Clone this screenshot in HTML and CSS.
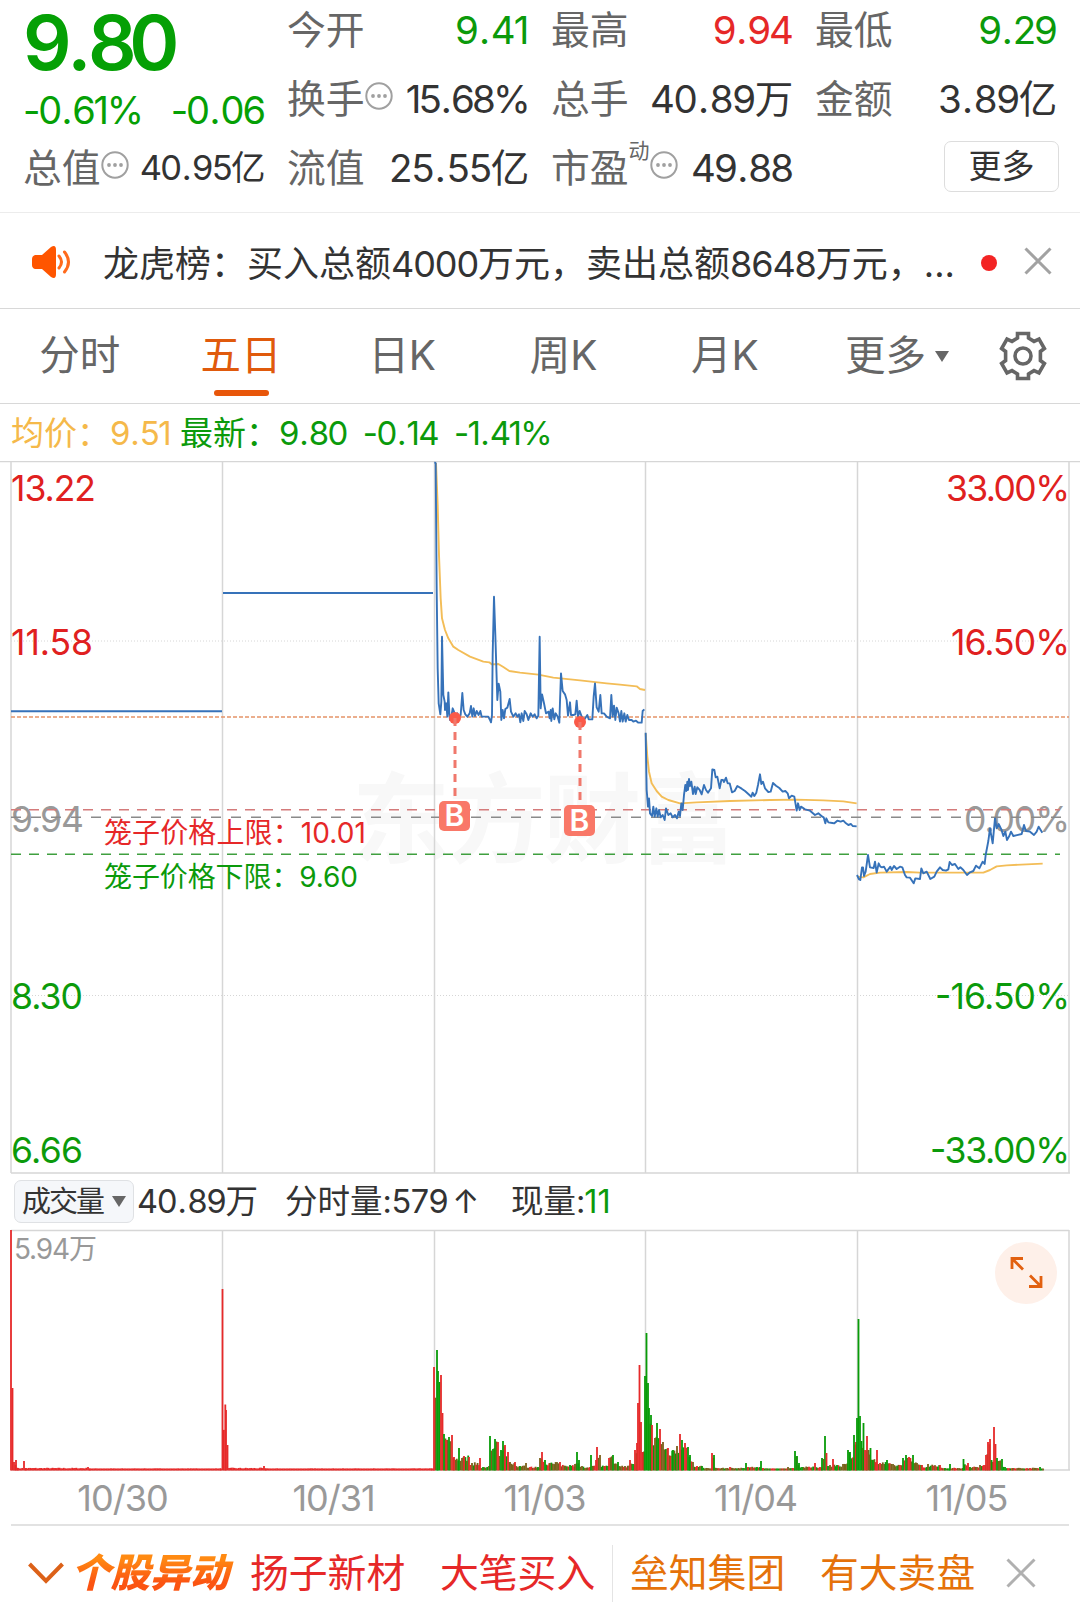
FILE: index.html
```html
<!DOCTYPE html>
<html lang="zh-CN">

<head>
    <meta charset="UTF-8">
    <meta name="viewport" content="width=device-width, initial-scale=1.0">
    <title>个股行情</title>
    <link rel="stylesheet" href="styles.css">
</head>

<body>
    <svg class="defs" width="0" height="0">
        <symbol id="info" viewBox="0 0 28 28">
            <circle cx="14" cy="14" r="12.7" fill="none" stroke="#a0a0a0" stroke-width="2" />
            <circle cx="8" cy="14" r="1.9" fill="#a0a0a0" />
            <circle cx="14" cy="14" r="1.9" fill="#a0a0a0" />
            <circle cx="20" cy="14" r="1.9" fill="#a0a0a0" />
        </symbol>
    </svg>

    <!-- Quote header -->
    <section class="quote">
        <div class="main-price">
            <div class="price">9<i>.</i>80</div>
            <div class="change"><span class="pct">-0<i>.</i>61%</span><span>-0<i>.</i>06</span></div>
        </div>
        <div class="cell"><span class="label">今开</span><span class="value green">9<i>.</i>41</span></div>
        <div class="cell"><span class="label">最高</span><span class="value short red">9<i>.</i>94</span></div>
        <div class="cell"><span class="label">最低</span><span class="value short green">9<i>.</i>29</span></div>
        <div class="cell"><span class="label">换手</span><svg class="info"><use href="#info" /></svg><span class="value pct">15<i>.</i>68%</span></div>
        <div class="cell"><span class="label">总手</span><span class="value">40<i>.</i>89万</span></div>
        <div class="cell"><span class="label">金额</span><span class="value">3<i>.</i>89亿</span></div>
        <div class="cell"><span class="label">总值</span><svg class="info"><use href="#info" /></svg><span class="value small">40<i>.</i>95亿</span></div>
        <div class="cell"><span class="label">流值</span><span class="value">25<i>.</i>55亿</span></div>
        <div class="cell"><span class="label">市盈</span><span class="sup">动</span><svg class="info"><use href="#info" /></svg><span class="value short">49<i>.</i>88</span></div>
        <div class="cell"><button class="more-btn">更多</button></div>
    </section>

    <!-- Notice -->
    <section class="notice">
        <svg class="horn" width="42" height="34" viewBox="0 0 42 34">
            <path d="M4 10h7l9-8q5-3 5 3v24q0 6-5 3l-9-8H4q-3-1-3-4v-6q0-3 3-4z" fill="#ff5500" />
            <path d="M28 11q5 6 0 12M33.500 7q8 10 0 20" fill="none" stroke="#ff6a1c" stroke-width="3" stroke-linecap="round" />
        </svg>
        <p class="notice-text">龙虎榜：买入总额<span class="num">4000</span>万元，卖出总额<span class="num">8648</span>万元，<span class="dots">...</span></p>
        <span class="red-dot"></span>
        <svg class="close" width="28" height="28" viewBox="0 0 28 28">
            <path d="M1.500 1.500L26.500 26.500M26.500 1.500L1.500 26.500" stroke="#a2a2a2" stroke-width="3" />
        </svg>
    </section>

    <!-- Period tabs -->
    <nav class="tabs">
        <a class="tab">分时</a>
        <a class="tab active">五日</a>
        <a class="tab">日K</a>
        <a class="tab">周K</a>
        <a class="tab">月K</a>
        <a class="tab tab-more">更多<span class="caret"></span></a>
        <svg class="gear" width="48" height="50" viewBox="0 0 48 50" fill="none" stroke="#666" stroke-width="3.600">
            <path d="M18.500 2.500h11v4.500l5.500 3.400 5-2.300 5.400 9.400-4 3v9l4 3-5.400 9.400-5-2.300-5.500 3.400v4.500h-11V43l-5.500-3.400-5 2.300-5.400-9.400 4-3v-9l-4-3L8 8.100l5 2.300L18.500 7z" />
            <circle cx="24" cy="25" r="8" />
        </svg>
    </nav>

    <div class="legend">
        <span class="avg">均价：<b>9<i>.</i>51</b></span>
        <span class="last">最新：<b>9<i>.</i>80</b><b>-0<i>.</i>14</b><b class="pct">-1<i>.</i>41%</b></span>
    </div>

    <!-- Price chart, 5 days -->
    <svg class="price-chart" width="1080" height="714" viewBox="0 461 1080 714">
        <text class="watermark" x="352" y="855" textLength="385">东方财富</text>
        <g class="grid">
            <path d="M0 461.500H1080M11 1173H1070" />
            <path d="M11 462V1173M222.500 462V1173M434.500 462V1173M645.500 462V1173M857.500 462V1173M1069 462V1173" />
            <path class="dotted" d="M11 641H1069M11 995.500H1069" />
        </g>
        <g class="axis">
            <text class="up" x="11" y="501" textLength="85">13.22</text>
            <text class="up" x="11" y="655" textLength="82">11.58</text>
            <text class="flat" x="11" y="832" textLength="73">9.94</text>
            <text class="down" x="11" y="1009" textLength="72">8.30</text>
            <text class="down" x="11" y="1163" textLength="72">6.66</text>
            <text class="up" x="946" y="501" textLength="124">33.00%</text>
            <text class="up" x="951" y="655" textLength="119">16.50%</text>
            <text class="flat" x="964" y="832" textLength="106">0.00%</text>
            <text class="down" x="935" y="1009" textLength="135">-16.50%</text>
            <text class="down" x="930" y="1163" textLength="140">-33.00%</text>
        </g>
        <path d="M11 717H1069" stroke="#e59468" stroke-width="1.600" stroke-dasharray="4 2" />
        <path d="M11 809.700H1060" stroke="#d47b7b" stroke-width="1.600" stroke-dasharray="10 8" />
        <path d="M11 817.300H1062" stroke="#8a8a8a" stroke-width="1.600" stroke-dasharray="10 10" />
        <path d="M11 854.300H1060" stroke="#3f9f3f" stroke-width="1.600" stroke-dasharray="10 8" />
        <text class="cage red" x="104" y="843" textLength="262">笼子价格上限：10.01</text>
        <text class="cage green" x="104" y="887" textLength="254">笼子价格下限：9.60</text>

        <path class="price-line" d="M11 711.300H222M223 593H433" />
        <g transform="translate(420 455) scale(.33333)">
            <polyline class="avg-line" points="48,24 53,150 57,300 62,430 66,490 75,525 85,550 100,575 115,585 150,605 190,620 208,622 215,628 235,627 250,636 268,648 300,653 355,659 400,668 480,676 560,685 600,689 650,694 660,702 675,705" />
            <polyline class="price-line" points="43,22 47,24 50,400 53,640 56,745 61,778 64,740 66,545 70,720 74,740 75,765 79,745 82,785 85,712 88,775 90,795 95,780 98,760 102,770 106,785 112,775 116,790 122,780 127,714 131,765 136,778 142,785 149,775 153,753 157,785 161,760 165,783 170,768 176,780 181,768 185,785 205,785 210,795 213,802 216,780 218,600 222,425 226,540 232,735 236,686 241,710 244,795 248,765 252,790 256,762 262,758 269,732 273,770 280,785 287,775 292,785 297,778 301,802 305,775 310,798 314,768 320,778 325,795 332,775 338,785 344,778 350,790 355,782 359,545 362,760 366,718 372,745 378,775 386,770 389,790 392,765 394,798 398,760 403,793 407,775 413,785 418,803 420,740 423,655 428,708 435,718 440,735 444,782 450,742 453,780 460,780 466,778 470,737 474,785 479,768 485,785 492,795 502,780 506,793 517,793 521,725 525,685 530,757 536,770 541,720 545,775 552,775 560,785 570,790 574,720 578,785 582,752 586,795 590,758 596,775 600,800 604,768 608,800 613,775 617,800 622,780 627,795 635,795 640,800 648,797 655,803 665,803 668,768 673,763" />
        </g>
        <g transform="translate(630 680) scale(.33333)">
            <polyline class="avg-line" points="47,160 52,230 57,275 65,310 80,333 95,350 115,360 150,370 200,367 300,363 420,360 500,359 580,361 640,364 680,370" />
            <polyline class="price-line" points="47,158 50,330 54,380 57,355 60,400 66,408 70,380 74,410 79,385 83,410 87,390 92,412 98,405 104,420 108,385 115,405 122,400 128,412 135,405 141,415 146,395 150,408 154,370 158,390 162,345 166,315 169,333 172,305 174,330 177,297 180,318 184,305 189,342 194,320 197,342 202,322 209,330 215,343 222,315 228,330 234,338 243,325 247,268 253,270 257,292 262,290 269,325 274,300 279,300 282,306 288,293 293,310 299,310 306,337 314,333 322,318 335,326 345,333 355,342 364,350 368,338 373,348 379,338 384,315 390,283 394,312 399,305 405,325 415,336 422,335 429,309 438,317 448,324 458,335 466,333 473,340 477,355 485,347 493,350 500,392 504,370 509,390 513,380 525,388 540,392 555,405 565,400 577,410 581,412 586,430 589,415 595,427 607,429 613,430 622,422 632,425 640,422 648,430 655,435 663,432 668,438 680,439" />
        </g>
        <g transform="translate(840 760) scale(.33333)">
            <polyline class="avg-line" points="53,350 70,352 90,342 120,338 200,336 240,338 430,338 450,330 470,319 500,316 560,313 608,311" />
            <polyline class="price-line" points="51,345 57,358 61,360 66,322 69,322 72,348 77,335 84,285 90,322 101,324 105,305 110,338 116,310 121,320 126,322 132,320 140,335 151,320 155,330 162,318 170,327 180,320 187,322 195,345 200,352 210,353 221,370 226,355 240,357 244,325 250,340 260,335 271,357 283,350 290,335 300,322 308,330 318,332 325,328 329,306 336,315 345,312 355,327 361,322 370,330 381,345 390,337 400,333 408,317 418,325 428,305 434,312 437,285 445,243 450,205 458,250 465,175 470,205 476,192 484,208 490,228 496,215 501,240 508,228 513,215 520,228 545,222 552,195 558,213 570,215 582,225 590,215 596,200 607,218" />
        </g>

        <!-- Buy marks -->
        <g class="mark">
            <circle cx="455" cy="718" r="6" />
            <path d="M455 718V797" />
            <rect x="439" y="801" width="31" height="30" rx="5" />
            <text x="454.500" y="826">B</text>
            <circle cx="580" cy="722" r="6" />
            <path d="M580 722V801" />
            <rect x="564" y="805" width="31" height="31" rx="5" />
            <text x="579.500" y="831">B</text>
        </g>
    </svg>

    <!-- Volume -->
    <div class="volume-bar">
        <button class="volume-btn"><span>成交量</span><span class="caret"></span></button>
        <span class="v1">40<i>.</i>89<em>万</em></span>
        <span class="v2"><em>分时量</em>:579<em class="arrow">↑</em></span>
        <span class="v3"><em>现量</em>:<b>11</b></span>
    </div>
    <div class="volume-wrap">
        <svg class="volume-chart" width="1080" height="242" viewBox="0 1229 1080 242">
            <path class="line" d="M11 1230.500H1069" />
            <path class="line" d="M222.500 1230V1470M434.500 1230V1470M645.500 1230V1470M857.500 1230V1470M1069 1230V1470M11 1470H1070" />
            <g id="bars"></g>
            <text class="vol-max" x="14" y="1259" textLength="83">5.94万</text>
        </svg>
        <button class="expand">
            <svg width="34" height="34" viewBox="0 0 34 34" fill="none" stroke="#e2600f" stroke-width="2.800">
                <path d="M3 13V2.500H14M4 3.500L14 13.500M32 20V30.500H20M31 29.500L21 19.500" />
            </svg>
        </button>
    </div>
    <div class="dates">
        <span>10/30</span><span>10/31</span><span>11/03</span><span>11/04</span><span>11/05</span>
    </div>

    <!-- Movers ticker -->
    <footer class="ticker">
        <svg class="chevron" width="36" height="22" viewBox="0 0 36 22">
            <path d="M1.500 2L18 19L34.500 2" fill="none" stroke="#dc6118" stroke-width="4" />
        </svg>
        <span class="ticker-logo">个股异动</span>
        <span class="mover red">扬子新材</span>
        <span class="mover red">大笔买入</span>
        <span class="divider"></span>
        <span class="mover orange">垒知集团</span>
        <span class="mover orange">有大卖盘</span>
        <svg class="close" width="30" height="30" viewBox="0 0 30 30">
            <path d="M1.500 1.500L28.500 28.500M28.500 1.500L1.500 28.500" stroke="#b0b0b0" stroke-width="3" />
        </svg>
    </footer>

    <script src="chart.js"></script>
</body>

</html>
```
FILE: styles.css
```css
/* General */
body {
    margin: 0;
    width: 1080px;
    height: 1603px;
    overflow: hidden;
    background: #fff;
    color: #333;
    font-family: Inter, "Noto Sans CJK SC", sans-serif;
}

button {
    padding: 0;
    font-family: inherit;
    color: inherit;
}

i,
em {
    font-style: normal;
}

/* decimal point gets a bit of air */
i {
    margin: 0 .05em 0 .04em;
}

b {
    font-weight: 400;
}

.defs {
    display: block;
}

.red {
    color: #e62828;
}

.green {
    color: #0b9a0b;
}

.orange {
    color: #e5720a;
}

/* Quote header */
.quote {
    display: grid;
    grid-template-columns: repeat(4, 240px);
    grid-template-rows: 60px 77px 61px;
    column-gap: 24px;
    height: 213px;
    padding: 0 24px;
    box-sizing: border-box;
    border-bottom: 1px solid #ececec;
}

.main-price {
    grid-row: span 2;
    margin-left: -1px;
    color: #05a005;
}

.price {
    height: 82px;
    font-size: 76px;
    line-height: 84px;
    font-weight: 600;
    letter-spacing: -7.4px;
}

.change {
    display: flex;
    justify-content: space-between;
    font-size: 38px;
    line-height: 57px;
    letter-spacing: -2px;
}

.change .pct {
    letter-spacing: -2.2px;
}

.cell {
    display: flex;
    align-items: center;
    line-height: 60px;
    white-space: nowrap;
}

.label {
    margin-left: -1px;
    font-size: 38.8px;
    color: #666;
}

.value {
    margin-left: auto;
    font-size: 38.5px;
    letter-spacing: -1.3px;
}

.value.short {
    letter-spacing: -2px;
}

.value.pct {
    letter-spacing: -2.8px;
}

.value.small {
    font-size: 34.5px;
    letter-spacing: -1.6px;
}

.info {
    width: 28px;
    height: 28px;
    margin-bottom: 5px;
}

.sup {
    margin-top: -33px;
    font-size: 21px;
    color: #666;
}

.more-btn {
    width: 115px;
    height: 51px;
    margin: 0 -3px 2px auto;
    border: 1px solid #ddd;
    border-radius: 7px;
    background: #fff;
    font-size: 33px;
    line-height: 49px;
}

/* Notice */
.notice {
    display: flex;
    align-items: center;
    height: 95px;
    padding: 0 28px 0 31px;
    border-bottom: 1px solid #d8d8d8;
}

.horn {
    margin-top: 3px;
}

.notice-text {
    flex: 1;
    margin: 0 0 0 30px;
    font-size: 36px;
    white-space: nowrap;
}

.num {
    letter-spacing: -1.1px;
}

.red-dot {
    width: 16px;
    height: 16px;
    margin: 4px 27px 0 0;
    border-radius: 50%;
    background: #f32424;
}

/* Tabs */
.tabs {
    display: flex;
    align-items: center;
    height: 94px;
    border-bottom: 1px solid #d8d8d8;
}

.tab {
    position: relative;
    display: flex;
    flex: 0 0 161.3px;
    align-items: center;
    justify-content: center;
    height: 94px;
    margin-left: -1px;
    margin-right: 1px;
    font-size: 40.5px;
    line-height: 96px;
    color: #666;
}

.tab.active {
    color: #e05a0c;
}

.tab.active::after {
    content: "";
    position: absolute;
    bottom: 7px;
    left: 54px;
    width: 55px;
    height: 6px;
    border-radius: 3px;
    background: #e8560a;
}

.tab-more {
    flex-basis: 183px;
}

.caret {
    margin-left: 9px;
    border: 7px solid transparent;
    border-top: 11px solid #666;
    border-bottom: 0;
}

.gear {
    margin-left: 10px;
}

/* Average / last price */
.legend {
    display: flex;
    align-items: center;
    height: 57px;
    padding-left: 11px;
    font-size: 33px;
    line-height: 62px;
    white-space: nowrap;
}

.legend b {
    letter-spacing: -1.6px;
}

.legend b.pct {
    letter-spacing: -1.8px;
}

.legend .avg {
    width: 169px;
    color: #f5b94a;
}

.legend .last {
    color: #0b9a0b;
}

.last b + b {
    margin-left: 16px;
}

/* Price chart */
.price-chart,
.volume-chart {
    display: block;
}

.grid path,
.volume-chart .line {
    fill: none;
    stroke: #d6d6d6;
    stroke-width: 1.5;
}

.grid .dotted {
    stroke-width: 1;
    stroke-dasharray: 1 2;
}

.watermark {
    font-size: 98px;
    font-weight: 700;
    fill: #f8f8f8;
}

.axis text {
    font-size: 35.5px;
}

.axis .up {
    fill: #e02020;
}

.axis .down {
    fill: #0b9a0b;
}

.axis .flat {
    fill: #999;
}

.cage {
    font-size: 28px;
    fill: currentColor;
}

.price-line,
.avg-line {
    fill: none;
    stroke: #3672b9;
    stroke-width: 1.9;
    stroke-linejoin: round;
    vector-effect: non-scaling-stroke;
}

.avg-line {
    stroke: #f3bd57;
}

.mark {
    fill: #f97868;
}

.mark circle {
    fill: #fa5a48;
}

.mark path {
    stroke: #f0786c;
    stroke-width: 3;
    stroke-dasharray: 8 6;
}

.mark text {
    font-size: 30px;
    font-weight: 600;
    fill: #fff;
    text-anchor: middle;
}

/* Volume */
.volume-bar {
    display: flex;
    align-items: center;
    height: 54px;
    padding-left: 14px;
    font-size: 32.5px;
    line-height: 56px;
    letter-spacing: -1.1px;
    white-space: nowrap;
}

.volume-bar em {
    letter-spacing: 0;
}

.volume-btn {
    display: flex;
    align-items: center;
    width: 120px;
    height: 43px;
    margin-bottom: 1px;
    padding-left: 7px;
    box-sizing: border-box;
    border: 1px solid #dfe1e4;
    border-radius: 7px;
    background: #f5f7fa;
    font-size: 29px;
    letter-spacing: -2px;
    line-height: 43px;
}

.v1 {
    width: 148px;
    margin-left: 3px;
}

.v2 {
    width: 226px;
    letter-spacing: -.4px;
}

.v2 .arrow {
    margin-left: 4px;
}

.v3 b {
    color: #0b9a0b;
    letter-spacing: 0;
}

.volume-wrap {
    position: relative;
}

.vol-max {
    font-size: 28px;
    fill: #999;
}

.expand {
    position: absolute;
    top: 13px;
    left: 995px;
    display: flex;
    align-items: center;
    justify-content: center;
    width: 62px;
    height: 62px;
    border: 0;
    border-radius: 50%;
    background: #fef0e9;
}

.dates {
    display: grid;
    grid-template-columns: repeat(5, 211px);
    height: 53px;
    margin: 0 11px;
    padding-left: 6px;
    width: 1052px;
    border-bottom: 2px solid #e2e2e2;
    color: #999;
    font-size: 36px;
    line-height: 54px;
    letter-spacing: -1px;
    text-align: center;
}

/* Ticker */
.ticker {
    display: flex;
    align-items: center;
    height: 94px;
    padding-left: 28px;
    line-height: 96px;
    white-space: nowrap;
}

.ticker-logo {
    width: 164px;
    margin: 0 15px 0 7px;
    background: linear-gradient(#ff8a12 35%, #fb5412 60%);
    -webkit-background-clip: text;
    background-clip: text;
    color: transparent;
    font-size: 39.5px;
    font-weight: 900;
    font-style: italic;
}

.mover {
    width: 190px;
    font-size: 38.8px;
}

.divider {
    width: 1px;
    height: 57px;
    margin: 0 17px 0 -18px;
    background: #e4e4e4;
}

.ticker .close {
    margin-left: -4px;
}
```
FILE: chart.js
```js
// [x, height, colour] - colour left out means mixed
const volume = [
    [11, 240, 'r'], [12.5, 82, 'r'], [14, 8, 'r'], [16, 10, 'r'], [18, 2, 'r'], [24, 9, 'r'], [26, 2, 'r'],
    [88, 3, 'r'], [90, 1.5, 'r'], [221, 1.5, 'r'],
    [222.5, 181, 'r'], [226, 60, 'r'], [227.5, 25, 'r'], [229, 2, 'r'], [264, 4, 'r'], [266, 1.5, 'r'], [432, 1.5, 'r'],
    [434, 103, 'r'], [437, 120, 'g'], [438, 99, 'g'], [439.5, 88, 'g'], [441, 95, 'r'], [442.5, 57, 'r'],
    [444, 36, 'g'], [446, 30], [449, 33, 'g'], [452, 35, 'r'], [454, 13], [459, 22, 'g'], [462, 12], [464, 14],
    [469, 13, 'r'], [472, 7], [480, 12], [483, 3], [489, 4], [490, 34, 'g'], [493, 21], [495, 31, 'g'],
    [498, 28, 'r'], [501, 20], [503, 29, 'g'], [505, 25, 'r'], [508, 18, 'r'], [510, 8], [515, 8], [520, 4],
    [526, 7], [530, 3], [538, 3], [540, 12], [542, 18, 'r'], [545, 10], [550, 7], [560, 8, 'r'], [570, 5],
    [575, 6], [577, 18, 'g'], [579, 10, 'g'], [582, 4], [590, 3], [591, 15, 'g'], [593, 4], [596, 10],
    [597, 23, 'r'], [600, 15], [605, 4], [608, 4], [609, 12, 'r'], [613, 15, 'g'], [618, 8], [625, 4],
    [630, 10, 'r'], [633, 6], [635, 20, 'r'], [637, 27, 'r'], [638, 67, 'r'], [639.5, 105, 'r'],
    [641, 48, 'r'], [642.5, 18, 'r'], [645, 94, 'g'], [646.5, 137, 'g'], [648, 87, 'g'], [649, 62, 'g'],
    [651, 55, 'g'], [652, 45, 'r'], [655, 32], [657, 47, 'g'], [660, 41, 'r'], [663, 28], [668, 22],
    [673, 20], [677, 24], [680, 36, 'r'], [682, 30], [685, 27, 'r'], [688, 23, 'g'], [690, 15], [693, 8],
    [697, 4], [702, 4], [707, 2], [712, 17, 'r'], [714, 15], [716, 2], [730, 3], [743, 2], [746, 7, 'g'],
    [748, 3], [757, 3], [761, 9, 'g'], [763, 2], [777, 1.5], [788, 3], [793, 2], [795, 19, 'g'],
    [797, 14, 'g'], [799, 7, 'g'], [802, 3], [815, 7, 'r'], [820, 3], [822, 12, 'g'], [825, 34, 'g'],
    [826.5, 17, 'r'], [828, 4], [830, 5], [833, 11, 'r'], [837, 5], [843, 6], [848, 20, 'g'], [850, 18],
    [854, 35, 'g'], [856, 28], [857, 52, 'g'], [858.5, 151, 'g'], [860, 54, 'g'], [861.5, 29],
    [863.5, 47, 'g'], [865, 20], [867, 34, 'r'], [868.5, 20], [870.5, 22, 'g'], [873, 10], [877, 20, 'r'],
    [880, 7], [887, 10], [893, 6], [900, 5], [903, 12, 'g'], [906, 15, 'g'], [909, 13, 'r'],
    [913, 15, 'g'], [917, 7], [922, 5], [927, 3], [928, 6], [940, 5], [945, 2], [950, 6, 'g'], [955, 2], [963, 2],
    [963.5, 11, 'g'], [968, 7], [970, 3], [980, 5], [984, 5], [986, 15, 'r'], [988, 28, 'r'],
    [990, 31, 'r'], [991.5, 10], [994, 43, 'r'], [995.5, 26, 'r'], [997, 12], [999, 9], [1002, 11, 'g'],
    [1005, 3], [1013, 2], [1030, 2], [1040, 3], [1043, 1.5]
];

const colors = { r: '#e62a2a', g: '#089c08', m: '#79601a' };
const base = 1470;
const bars = document.getElementById('bars');

let seed = 7;
function random() {
    seed = (seed * 16807) % 2147483647;
    return seed / 2147483647;
}

function addBar(x, height, color) {
    const bar = document.createElementNS('http://www.w3.org/2000/svg', 'rect');
    bar.setAttribute('x', x - 0.9);
    bar.setAttribute('y', base - height);
    bar.setAttribute('width', 1.8);
    bar.setAttribute('height', height + 0.5);
    bar.setAttribute('fill', colors[color]);
    bars.appendChild(bar);
}

volume.forEach(([x, height, color], i) => {
    const next = volume[i + 1];
    if (next) {
        const low = Math.min(height, next[1]);
        for (let p = x + 1.4; p < next[0] - 0.5; p += 1.4) {
            const pick = x < 430 ? 'r' : 'rgmm'[Math.floor(random() * 4)];
            addBar(p, Math.max(1.5, low * (0.65 + random() * 0.5)), pick);
        }
    }
    addBar(x, height, color || 'rgm'[i % 3]);
});
```
